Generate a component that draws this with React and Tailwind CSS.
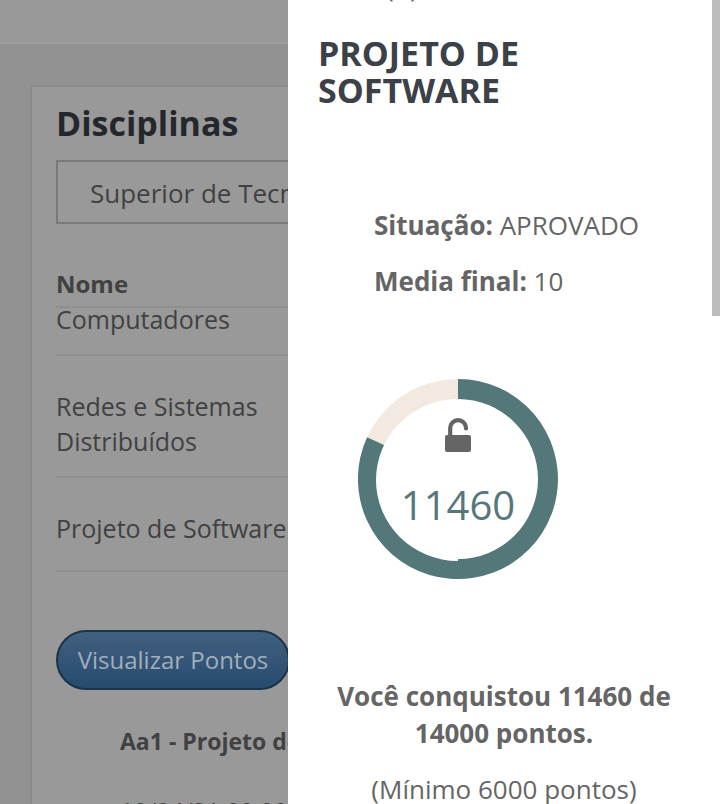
const subjects = [
  { name: 'Computadores', cell: 'pb-[24px] leading-[22px]' },
  { name: 'Redes e Sistemas Distribuídos', cell: 'pt-[33px] pb-[17px] leading-[35px]' },
  { name: 'Projeto de Software', cell: 'pt-[33px] pb-[24px] leading-[35px]' },
];

function UnlockIcon() {
  return (
    <svg viewBox="0 0 26 34" className="h-[34px] w-[26px]" aria-hidden="true">
      <path d="M5.200 18V10a7.900 7.900 0 0 1 15.800 0V10.500" fill="none" stroke="#656565" strokeWidth="4.200" strokeLinecap="round" />
      <rect y="17" width="26" height="17" rx="2" fill="#656565" />
    </svg>
  );
}

function PointsRing() {
  return (
    <div className="relative h-[200px] w-[200px]">
      <svg viewBox="0 0 200 200" className="absolute inset-0 h-full w-full" aria-hidden="true">
        <circle cx="100" cy="100" r="100" fill="#f2e9e1" />
        <path d="M100 100V0A100 100 0 1 1 9.100 58.200Z" fill="#54777a" />
        <path d="M100 20A80 80 0 0 1 100 180V182A82 81 0 0 1 100 20Z" fill="#fff" />
      </svg>
      <div className="relative flex flex-col items-center pt-[39px]">
        <UnlockIcon />
        <span className="mt-[25px] text-[40px] leading-[56px] font-normal text-[#54777a]">11460</span>
      </div>
    </div>
  );
}

function Subjects() {
  return (
    <main className="h-full w-2/5 shrink-0 overflow-hidden bg-[#929292] text-[#414141]">
      <header className="h-[44px] border-b-2 border-[#9c9c9c] bg-[#999]" />
      <section className="mt-[41px] ml-[30px] h-full w-[660px] border-2 border-[#8a8a8a] bg-[#999] px-[24px] pt-[16px]">
        <h2 className="text-[34px] leading-[40px] font-bold text-[#24272b]">Disciplinas</h2>
        <select
          aria-label="Curso"
          className="mt-[17px] block h-[64px] w-full appearance-none border-2 border-[#7a7a7a] bg-transparent px-[32px] pt-[2px] text-[26px]"
        >
          <option>Superior de Tecnologia em Análise e Desenvolvimento de Sistemas</option>
        </select>
        <table className="mt-[40px] w-full border-collapse text-left text-[25px]">
          <thead>
            <tr className="border-b-2 border-[#8f8f8f]">
              <th scope="col" className="pb-[2px] text-[24px] leading-[40px] font-bold">Nome</th>
            </tr>
          </thead>
          <tbody>
            {subjects.map((s) => (
              <tr key={s.name} className="border-b-2 border-[#8f8f8f]">
                <td className={s.cell}>
                  <div className="w-[240px]">{s.name}</div>
                </td>
              </tr>
            ))}
          </tbody>
        </table>
        <button
          type="button"
          className="mt-[58px] block h-[60px] w-[234px] rounded-full border-2 border-[#1b3349] bg-linear-to-b from-[#42607f] to-[#264b6f] text-[24px] text-[#a3aebb]"
        >
          Visualizar Pontos
        </button>
        <div className="ml-[64px] pt-[33px] whitespace-nowrap">
          <h3 className="text-[23px] leading-[36px] font-bold">Aa1 - Projeto de Software</h3>
          <p className="mt-[34px] text-[24px] leading-[36px]">19/04/21 00:00 h</p>
        </div>
      </section>
    </main>
  );
}

function PointsPanel() {
  return (
    <aside className="h-full min-w-0 flex-1 overflow-hidden bg-white text-[#656565]">
      <p className="-mt-[31px] pl-[98px] text-[26px] leading-[37px]">(A)</p>
      <h1 className="mt-[29px] pr-[100px] pl-[30px] text-[34px] leading-[37px] font-bold text-[#3c4047]">
        PROJETO DE SOFTWARE
      </h1>
      <div className="mt-[98px] pl-[86px] text-[26px] leading-[37px]">
        <p><strong>Situação:</strong> APROVADO</p>
        <p className="mt-[19px]"><strong>Media final:</strong> 10</p>
      </div>
      <div className="mt-[79px] pl-[70px]">
        <PointsRing />
      </div>
      <div className="mt-[99px] pr-[36px] pl-[44px] text-center text-[26px] leading-[37px]">
        <p className="font-bold">Você conquistou 11460 de 14000 pontos.</p>
        <p className="mt-[19px]">(Mínimo 6000 pontos)</p>
      </div>
    </aside>
  );
}

export default function App() {
  return (
    <div className="flex h-screen overflow-hidden bg-white font-['Open_Sans','Noto_Sans',sans-serif]">
      <Subjects />
      <PointsPanel />
      <div className="h-[316px] w-[8px] shrink-0 bg-[#bdbdbd]" aria-hidden="true" />
    </div>
  );
}
